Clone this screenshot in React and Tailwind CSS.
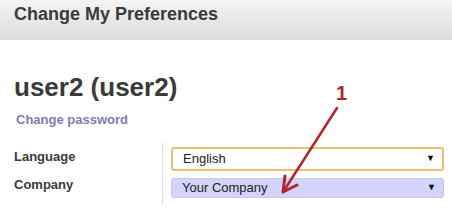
import React from 'react';

function Arrow() {
  // annotation arrow with the "1" label, drawn over the form
  return (
    <svg className="absolute left-0 top-0 pointer-events-none" width="452" height="214" viewBox="0 0 452 214">
      <line x1="337" y1="108" x2="285" y2="189" stroke="#b0262a" strokeWidth="2.5" strokeLinecap="round" />
      <path d="M283 192 L285 176 M283 192 L297 185" stroke="#b0262a" strokeWidth="3" strokeLinecap="round" fill="none" />
      <text x="336" y="100" fill="#b5242a" fontSize="20" fontWeight="bold" fontFamily="Liberation Sans, Arial, sans-serif">1</text>
    </svg>
  );
}

function Select({ value, className }) {
  return (
    <div className={`flex items-center justify-between rounded-[3px] pl-[10px] pr-[7px] text-[13px] text-[#222] ${className}`}>
      <span>{value}</span>
      <span className="text-[9px] text-black">▼</span>
    </div>
  );
}

export default function App() {
  return (
    <div className="relative w-[452px] h-[214px] overflow-hidden bg-white font-['Liberation_Sans',Arial,sans-serif]">
      <div className="h-10 bg-gradient-to-b from-[#f4f4f4] to-[#dcdcdc] px-[14px] pt-[2px]">
        <h1 className="text-[18px] font-bold text-[#3a3a3a] leading-[24px]">Change My Preferences</h1>
      </div>

      <div className="px-[14px] pt-[32px]">
        <h2 className="text-[26px] font-bold text-[#3a3a3a] leading-[30px]">user2 (user2)</h2>
        <a className="block mt-[10px] ml-[2px] text-[13px] font-bold text-[#7b7bb4] leading-[16px]">Change password</a>
      </div>

      <div className="mt-[15px] pl-[14px] pr-[8px] grid grid-cols-[148px_1fr]">
        <div className="flex flex-col pt-[6px]">
          <div className="h-[28px] text-[13px] font-bold text-[#3a3a3a] leading-[16px]">Language</div>
          <div className="h-[28px] text-[13px] font-bold text-[#3a3a3a] leading-[16px]">Company</div>
        </div>
        <div className="border-l border-[#dedede] pl-[8px] pt-[4px] pb-[5px] flex flex-col gap-[7px]">
          <Select value="English" className="h-[24px] border-2 border-[#ecc070] bg-white" />
          <Select value="Your Company" className="h-[20px] border border-[#c9c9ee] bg-[#d3d3fb]" />
        </div>
      </div>

      <Arrow />
    </div>
  );
}
